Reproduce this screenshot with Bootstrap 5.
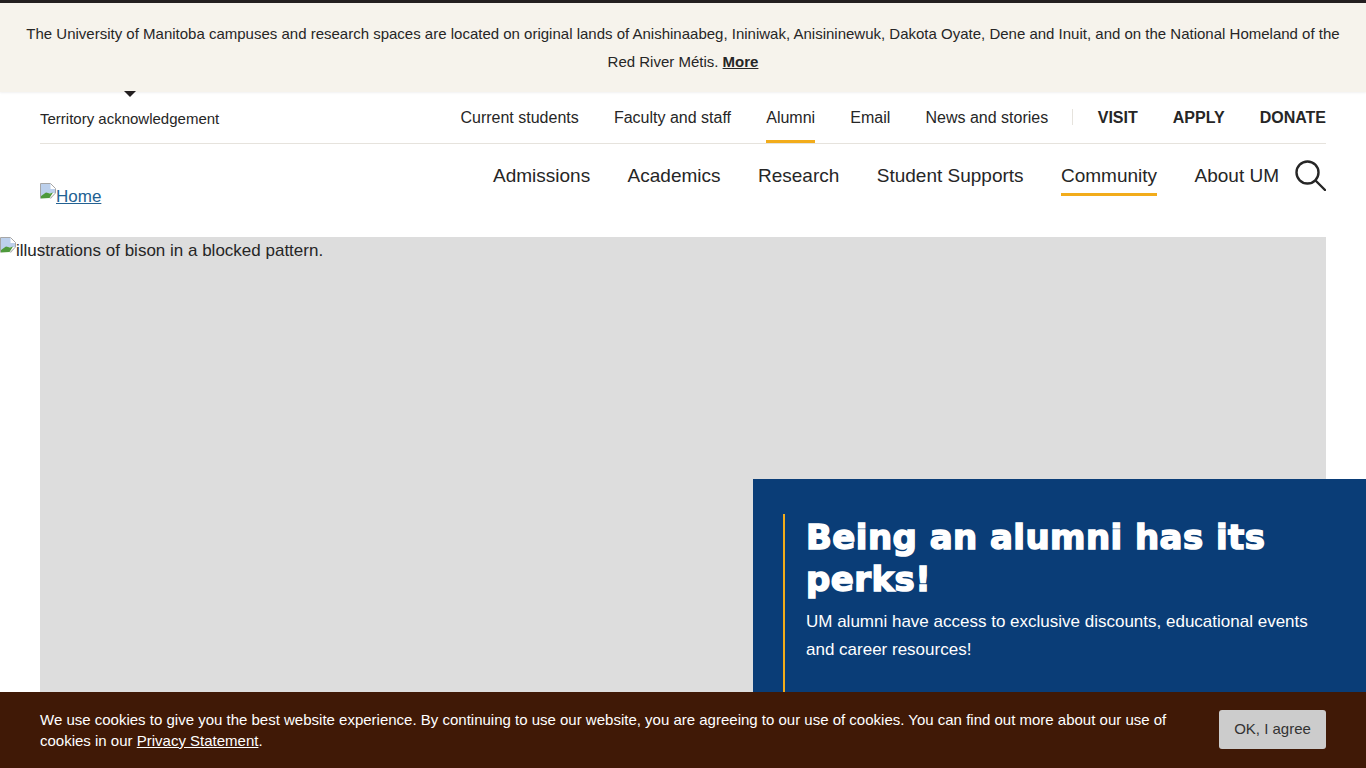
<!DOCTYPE html>
<html lang="en">
<head>
  <meta charset="UTF-8">
  <title>Alumni | University of Manitoba</title>
  <link href="https://cdn.jsdelivr.net/npm/bootstrap@5.3.2/dist/css/bootstrap.min.css" rel="stylesheet">
  <style>
    html, body { height: 768px; overflow: hidden; }
    body {
      font-family: "Liberation Sans", Arial, sans-serif;
      color: #262626;
      background: #fff;
      border-top: 3px solid #231f20;
    }
    .land-note {
      background: #f6f3ec;
      height: 89px;
      padding: 17px 20px 0;
      font-size: 15px;
      line-height: 28px;
      text-align: center;
      box-shadow: 0 1px 2px rgba(0,0,0,.06);
    }
    .land-note a { color: #262626; font-weight: 700; }
    .site-head { padding: 0 40px; position: relative; height: 145px; }
    .land-toggle { font-size: 15px; color: #262626; text-decoration: none; position: relative; margin-top: 16px; }
    .land-toggle::before {
      content: "";
      position: absolute;
      top: -17px;
      left: 84px;
      border: 6px solid transparent;
      border-bottom-width: 0;
      border-top-color: #231f20;
    }
    .util-row { height: 52px; border-bottom: 1px solid #e6e3dd; }
    .util-links { gap: 35.2px; font-size: 16px; }
    .util-links a { color: #262626; text-decoration: none; display: block; height: 41px; padding-top: 4px; margin-top: 10px; }
    .util-links a.on { border-bottom: 3px solid #f2ac1b; }
    .util-cta { gap: 35px; margin-left: 24px; padding-left: 25.5px; position: relative; font-size: 16px; font-weight: 700; }
    .util-cta::before { content: ""; position: absolute; left: 0; top: 17px; height: 16px; border-left: 1px solid #e6e3dd; }
    .util-cta a { color: #262626; text-decoration: none; display: block; margin-top: 10px; padding-top: 4px; }
    .main-row { position: relative; }
    .logo-link { font-size: 17px; color: #236192; position: absolute; left: 0; top: 40px; line-height: 26px; }
    .miss-img { width: 16px; height: 16px; vertical-align: top; margin-top: -1px; }
    .main-links { gap: 37.45px; font-size: 19px; padding-top: 18px; }
    .main-links a { color: #262626; text-decoration: none; display: block; height: 34px; line-height: 28px; }
    .main-links a.on { border-bottom: 3px solid #f2ac1b; }
    .find-btn { margin-left: 16px; line-height: 0; }
    .hero-wrap { position: relative; height: 531px; padding-left: 40px; padding-right: 40px; }
    .hero-pic { background: #ddd; height: 100%; }
    .hero-alt { position: absolute; left: 0; top: 1px; font-size: 17px; line-height: 26px; white-space: nowrap; }
    .hero-card {
      position: absolute;
      left: 753px;
      right: 0;
      top: 242px;
      bottom: 0;
      background: #0a3d77;
      color: #fff;
      padding: 35px 30px 0;
    }
    .hero-inner { border-left: 2px solid #f2ac1b; padding-left: 21px; height: 100%; }
    .hero-title {
      font-family: "DejaVu Sans", "Liberation Sans", sans-serif;
      font-weight: 700;
      font-size: 34px;
      line-height: 42px;
      letter-spacing: .44px;
      -webkit-text-stroke: 1.5px #fff;
      margin: 0 0 8px;
      padding-top: 2px;
    }
    .hero-text { font-size: 17px; line-height: 28px; margin: 0; }
    .cookie-bar {
      background: #401906;
      color: #fff;
      height: 76px;
      padding: 0 40px;
      font-size: 15px;
      line-height: 21px;
    }
    .cookie-bar a { color: #fff; }
    .cookie-copy { width: 1135px; margin: 0; }
    .cookie-ok {
      background: #ccc;
      color: #333;
      border: 0;
      width: 107px;
      height: 39px;
      font-size: 15px;
      padding: 0;
      border-radius: 3px;
      margin-bottom: 2px;
    }
  </style>
</head>
<body>

<!-- Territory note -->
<div class="land-note">
  The University of Manitoba campuses and research spaces are located on original lands of Anishinaabeg, Ininiwak, Anisininewuk, Dakota Oyate, Dene and Inuit, and on the National Homeland of the Red River Métis. <a href="#">More</a>
</div>

<!-- Header -->
<header class="site-head">
  <div class="util-row d-flex justify-content-between align-items-start">
    <a class="land-toggle" href="#">Territory acknowledgement</a>
    <div class="d-flex">
      <nav class="util-links d-flex">
        <a href="#">Current students</a>
        <a href="#">Faculty and staff</a>
        <a class="on" href="#">Alumni</a>
        <a href="#">Email</a>
        <a href="#">News and stories</a>
      </nav>
      <div class="util-cta d-flex">
        <a href="#">VISIT</a>
        <a href="#">APPLY</a>
        <a href="#">DONATE</a>
      </div>
    </div>
  </div>
  <div class="main-row d-flex justify-content-end">
    <a class="logo-link" href="#"><svg class="miss-img" viewBox="0 0 16 16"><path d="M.5 15.500V.5h10l5 5v5" fill="none" stroke="#a6a6a6"/><path d="M1 1h9.500v5H15v4L9 10 1 13z" fill="#bcd0ec"/><path d="M1 15.500V13l5-3.500 4 1 3-1-3.500 5.500z" fill="#4e9a3c"/><path d="M9.500 15.500 15 10v1l-4 4.500z" fill="#a6a6a6"/></svg>Home</a>
    <nav class="main-links d-flex">
      <a href="#">Admissions</a>
      <a href="#">Academics</a>
      <a href="#">Research</a>
      <a href="#">Student Supports</a>
      <a class="on" href="#">Community</a>
      <a href="#">About UM</a>
    </nav>
    <a class="find-btn" href="#" aria-label="Search">
      <svg width="31" height="31" viewBox="0 0 31 31" class="mt-3" fill="none" stroke="#262626" stroke-width="2.4"><circle cx="12.500" cy="12.500" r="11"/><path d="M20.500 20.500 30 30" stroke-linecap="round"/></svg>
    </a>
  </div>
</header>

<!-- Hero -->
<section class="hero-wrap">
  <div class="hero-pic"></div>
  <div class="hero-alt"><svg class="miss-img" viewBox="0 0 16 16"><path d="M.5 15.500V.5h10l5 5v5" fill="none" stroke="#a6a6a6"/><path d="M1 1h9.500v5H15v4L9 10 1 13z" fill="#bcd0ec"/><path d="M1 15.500V13l5-3.500 4 1 3-1-3.500 5.500z" fill="#4e9a3c"/><path d="M9.500 15.500 15 10v1l-4 4.500z" fill="#a6a6a6"/></svg>illustrations of bison in a blocked pattern.</div>
  <div class="hero-card">
    <div class="hero-inner">
      <h1 class="hero-title">Being an alumni has its perks!</h1>
      <p class="hero-text">UM alumni have access to exclusive discounts, educational events and career resources!</p>
    </div>
  </div>
</section>

<!-- Cookie notice -->
<div class="cookie-bar fixed-bottom d-flex justify-content-between align-items-center">
  <p class="cookie-copy">We use cookies to give you the best website experience. By continuing to use our website, you are agreeing to our use of cookies. You can find out more about our use of cookies in our <a href="#">Privacy Statement</a>.</p>
  <button class="btn cookie-ok" type="button">OK, I agree</button>
</div>

<script src="https://cdn.jsdelivr.net/npm/bootstrap@5.3.2/dist/js/bootstrap.bundle.min.js"></script>
</body>
</html>
